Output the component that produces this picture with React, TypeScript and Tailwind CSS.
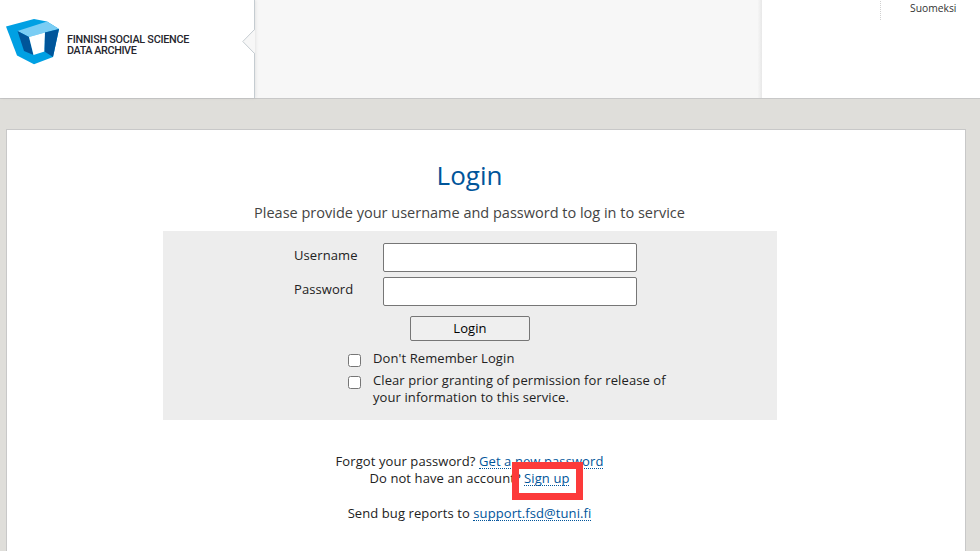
import React from "react";

function Logo() {
  return (
    <div className="flex pl-1.5 pt-[19px]">
      <svg width="54" height="46" viewBox="0 0 54 46" className="shrink-0">
        <path d="M0 7.500 L28 0 L41 2.500 L53 10 L47 38 L28 45.300 L11 36.500 Z" fill="#00a0e3" />
        <path d="M11.500 12 L41 2.500 L53 10 L39 13.500 L23 18 Z" fill="#7acdf4" />
        <path d="M11.500 12 L23 18 L27.500 36 L18 32 Z" fill="#00559a" />
        <path d="M23 18 L39 13.500 L38.500 32.500 L27.500 36 Z" fill="#fff" />
        <path d="M39 13.500 L53 10 L47 38 L38.500 32.500 Z" fill="#00559a" />
      </svg>
      <div className="ml-[7px] mt-[15px] whitespace-nowrap font-['Roboto',sans-serif] text-[10.8px] font-medium leading-[11px] tracking-[-0.25px] text-[#25252d]">
        FINNISH SOCIAL SCIENCE
        <br />
        <span className="tracking-[-0.4px]">DATA ARCHIVE</span>
      </div>
    </div>
  );
}

function Header() {
  return (
    <header className="flex h-[99px] border-b border-[#c8c8c8] bg-[#f7f7f7]">
      <div className="relative h-[98px] w-[255px] border-r border-[#c5ccd1] bg-white shadow-[1px_0_3px_rgba(0,0,0,0.08)]">
        <Logo />
        <svg className="absolute left-[242px] top-[29px]" width="13" height="26" viewBox="0 0 13 26">
          <path d="M13 0.500 L0.800 12.500 L13 24.500 Z" fill="#f7f7f7" />
          <path d="M12.500 0.500 L0.800 12.500 L12.500 24.500" fill="none" stroke="#c5ccd1" />
        </svg>
      </div>
      <div className="w-[503px]" />
      <div className="w-1 bg-linear-to-r from-[#f5f5f5] to-[#e8e8e8]" />
      <div className="flex flex-1 justify-end bg-white">
        <a className="mt-px h-[19px] w-[100px] border-l border-dotted border-[#d0d0d0] pl-[29px] text-[10.3px] leading-[15px] text-[#333]">
          Suomeksi
        </a>
      </div>
    </header>
  );
}

function Field({ label, type }: { label: string; type: string }) {
  return (
    <label className="flex h-[29px]">
      <span className="w-[89px] pt-1">{label}</span>
      <input type={type} className="h-[29px] w-[254px] rounded-[2px] border border-[#767676] bg-white" />
    </label>
  );
}

function Check({ children }: { children: React.ReactNode }) {
  return (
    <label className="flex">
      <input type="checkbox" className="mr-3 mt-[5px] size-[13px] shrink-0" />
      <span className="whitespace-nowrap pt-px">{children}</span>
    </label>
  );
}

function Link({ children }: { children: React.ReactNode }) {
  return (
    <a className="inline-block border-b border-dotted border-[#00559a] leading-[14px] text-[#00559a]">{children}</a>
  );
}

export default function App() {
  return (
    <div className="h-[551px] overflow-hidden bg-[#dfdeda] font-['Open_Sans','Noto_Sans',sans-serif]">
      <Header />
      <main className="relative ml-1.5 mt-[30px] h-[440px] w-[960px] border border-[#c8c8c8] bg-white text-[13px] leading-[17px] tracking-[0.09px] text-[#222]">
        <h1 className="w-[925px] pt-[27px] text-center text-[26px] leading-9 tracking-normal text-[#00559a]">Login</h1>
        <p className="mt-2.5 w-[925px] text-center text-[14.5px] leading-5 tracking-normal text-[#444]">
          Please provide your username and password to log in to service
        </p>
        <form className="ml-[156px] mt-2 h-[189px] w-[614px] bg-[#ededed] pl-[131px] pt-3">
          <div className="flex flex-col gap-[5px]">
            <Field label="Username" type="text" />
            <Field label="Password" type="password" />
          </div>
          <button type="button" className="ml-[116px] mt-2.5 block h-[25px] w-[120px] rounded-[2px] border border-[#767676] bg-[#efefef] text-black">
            Login
          </button>
          <div className="ml-[54px] mt-2 flex flex-col gap-1">
            <Check>Don't Remember Login</Check>
            <Check>
              Clear prior granting of permission for release of
              <br />
              your information to this service.
            </Check>
          </div>
        </form>
        <div className="mt-[33px] w-[925px] text-center">
          <p className="h-[17px]">Forgot your password? <Link>Get a new password</Link></p>
          <p className="h-[17px]">Do not have an account? <Link>Sign up</Link></p>
          <p className="mt-[18px] h-[17px]">Send bug reports to <Link>support.fsd@tuni.fi</Link></p>
        </div>
        <div className="absolute left-[505px] top-[332px] h-[38px] w-[71px] border-[7px] border-[#fc3a3a]" />
      </main>
    </div>
  );
}
